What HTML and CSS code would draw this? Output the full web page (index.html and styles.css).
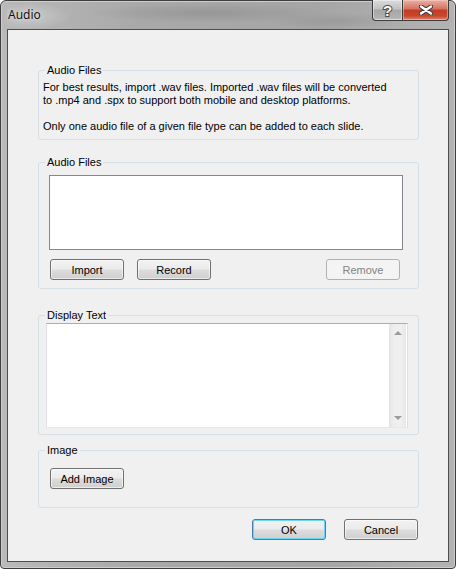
FILE: index.html
```html
<!DOCTYPE html>
<html lang="en">
  <head>
    <meta charset="UTF-8" />
    <title>Audio</title>
    <link rel="stylesheet" href="styles.css">
  </head>
  <body>
    <div class="window">
      <div class="titlebar">
        <span class="title">Audio</span>
        <div class="caption-buttons">
          <button class="caption-btn help">?</button>
          <button class="caption-btn close">
            <svg width="14" height="10" viewBox="0 0 14 10">
              <path d="M2 1.5 L12 8.5 M12 1.5 L2 8.5" stroke="#3a3a3a" stroke-width="4.4" stroke-linecap="round" />
              <path d="M2 1.5 L12 8.5 M12 1.5 L2 8.5" stroke="#fff" stroke-width="2.4" stroke-linecap="round" />
            </svg>
          </button>
        </div>
      </div>

      <div class="client">
        <fieldset class="group">
          <legend>Audio Files</legend>
          <div class="group-body info">
            <p>For best results, import .wav files. Imported .wav files will be converted<br>to .mp4 and .spx to support both mobile and desktop platforms.</p>
            <p>Only one audio file of a given file type can be added to each slide.</p>
          </div>
        </fieldset>

        <fieldset class="group files">
          <legend>Audio Files</legend>
          <div class="group-body">
            <div class="listbox"></div>
            <div class="button-row">
              <button class="btn">Import</button>
              <button class="btn">Record</button>
              <button class="btn remove" disabled>Remove</button>
            </div>
          </div>
        </fieldset>

        <fieldset class="group display">
          <legend>Display Text</legend>
          <div class="group-body">
            <div class="textbox">
              <textarea></textarea>
              <div class="vscroll">
                <span class="arrow up"></span>
                <span class="arrow down"></span>
              </div>
            </div>
          </div>
        </fieldset>

        <fieldset class="group image">
          <legend>Image</legend>
          <div class="group-body">
            <button class="btn">Add Image</button>
          </div>
        </fieldset>

        <div class="footer">
          <button class="btn default">OK</button>
          <button class="btn">Cancel</button>
        </div>
      </div>
    </div>
  </body>
</html>
```

FILE: styles.css
```css
body {
  margin: 0;
  background: #fff;
  font-family: "Liberation Sans", Arial, sans-serif;
  font-size: 11px;
  line-height: 13px;
  color: #000;
}
.window {
  width: 456px;
  height: 569px;
  box-sizing: border-box;
  border: 1px solid #3e3e3e;
  border-radius: 6px 6px 4px 4px;
  padding: 0 6px 6px;
  display: flex;
  flex-direction: column;
  background: linear-gradient(to right, #b9b9b9, #a9a9a9 30%, #a5a5a5 70%, #b3b3b3);
  box-shadow: inset 0 0 0 1px #cdcdcd;
}
.titlebar {
  height: 28px;
  display: flex;
  align-items: flex-start;
  background:
    radial-gradient(ellipse 40px 13px at 24px 15px, rgba(205, 205, 205, 0.8), rgba(205, 205, 205, 0)),
    radial-gradient(ellipse 120px 10px at 200px 12px, rgba(120, 120, 120, 0.35), rgba(120, 120, 120, 0)),
    radial-gradient(ellipse 70px 8px at 330px 20px, rgba(130, 130, 130, 0.3), rgba(130, 130, 130, 0));
}
.title {
  margin-left: 1px;
  font-family: "Noto Sans", sans-serif;
  font-size: 12px;
  line-height: 28px;
  color: #111;
  text-shadow: 0 0 5px #ddd, 0 0 2px #e6e6e6;
}
.caption-buttons {
  margin-left: auto;
  margin-top: -1px;
  display: flex;
}
.caption-btn {
  height: 21px;
  padding: 0;
  border: 1px solid #3c3c3c;
  border-top: none;
  display: flex;
  align-items: center;
  justify-content: center;
}
.help {
  width: 30px;
  border-right: none;
  border-radius: 0 0 0 4px;
  background: linear-gradient(#dcdcdc, #c2c2c2 45%, #a6a6a6 50%, #b2b2b2 90%, #c9c9c9);
  box-shadow: inset 0 0 0 1px rgba(255, 255, 255, 0.4);
  font-family: "Liberation Sans", sans-serif;
  font-weight: bold;
  font-size: 15px;
  color: #fff;
  -webkit-text-stroke: 2px #4a4a4a;
  paint-order: stroke fill;
}
.close {
  width: 47px;
  border-radius: 0 0 4px 0;
  background: linear-gradient(#e9b1a5, #d6725f 45%, #c43d24 50%, #c9462d 80%, #dc8a76);
  box-shadow: inset 0 0 0 1px rgba(255, 220, 210, 0.45);
}
.client {
  flex: 1;
  border: 1px solid #4d4d4d;
  background: #f0f0f0;
  padding-top: 34px;
}
.group {
  margin: 0 0 0 30px;
  width: 381px;
  box-sizing: border-box;
  padding: 0;
  border: 1px solid #d5dfe5;
  border-radius: 3px;
  min-inline-size: 0;
}
.group legend {
  margin-left: 6px;
  padding: 0 2px;
  line-height: 13px;
}
.group-body {
  padding: 6px 0 8px 10px;
}
.info {
  padding: 4px 4px 6px 4px;
}
.info p {
  margin: 0;
}
.info p + p {
  margin-top: 13px;
}
.files {
  margin-top: 16px;
}
.listbox {
  width: 354px;
  height: 75px;
  box-sizing: border-box;
  border: 1px solid #828790;
  background: #fff;
}
.button-row {
  width: 354px;
  margin-top: 9px;
  box-sizing: border-box;
  padding: 0 3px 0 1px;
  display: flex;
  gap: 13px;
}
.remove {
  margin-left: auto;
}
.btn {
  width: 74px;
  height: 21px;
  box-sizing: border-box;
  padding: 0;
  border: 1px solid #707070;
  border-radius: 3px;
  background: linear-gradient(#f2f2f2, #ebebeb 48%, #dddddd 52%, #cfcfcf);
  box-shadow: inset 0 0 0 1px rgba(255, 255, 255, 0.6);
  font-family: "Liberation Sans", Arial, sans-serif;
  font-size: 11px;
  color: #000;
}
.btn:disabled {
  border-color: #adb2b5;
  background: #f4f4f4;
  box-shadow: none;
  color: #838383;
}
.btn.default {
  border-color: #3c7fb1;
  box-shadow: inset 0 0 0 1px #6fd5f7;
}
.display {
  margin-top: 20px;
}
.display .group-body {
  padding: 1px 0 6px 7px;
}
.textbox {
  width: 362px;
  height: 105px;
  box-sizing: border-box;
  border: 1px solid;
  border-color: #abadb3 #dbdfe6 #e3e9ef #e2e3ea;
  background: #fff;
  display: flex;
}
.textbox textarea {
  flex: 1;
  border: none;
  resize: none;
  outline: none;
  padding: 2px;
  font-family: "Liberation Sans", Arial, sans-serif;
  font-size: 11px;
}
.vscroll {
  width: 17px;
  margin-right: 1px;
  background: linear-gradient(to right, #e3e3e3, #eeeeee 30%, #f0f0f0 70%, #e6e6e6);
  display: flex;
  flex-direction: column;
  justify-content: space-between;
  align-items: center;
  padding: 7px 0;
}
.arrow {
  width: 0;
  height: 0;
  border-left: 4px solid transparent;
  border-right: 4px solid transparent;
}
.arrow.up {
  border-bottom: 4px solid #9b9b9b;
}
.arrow.down {
  border-top: 4px solid #9b9b9b;
}
.image {
  margin-top: 9px;
}
.image .group-body {
  padding: 11px 0 18px 11px;
}
.footer {
  margin-top: 11px;
  padding-right: 30px;
  display: flex;
  justify-content: flex-end;
  gap: 18px;
}
```
